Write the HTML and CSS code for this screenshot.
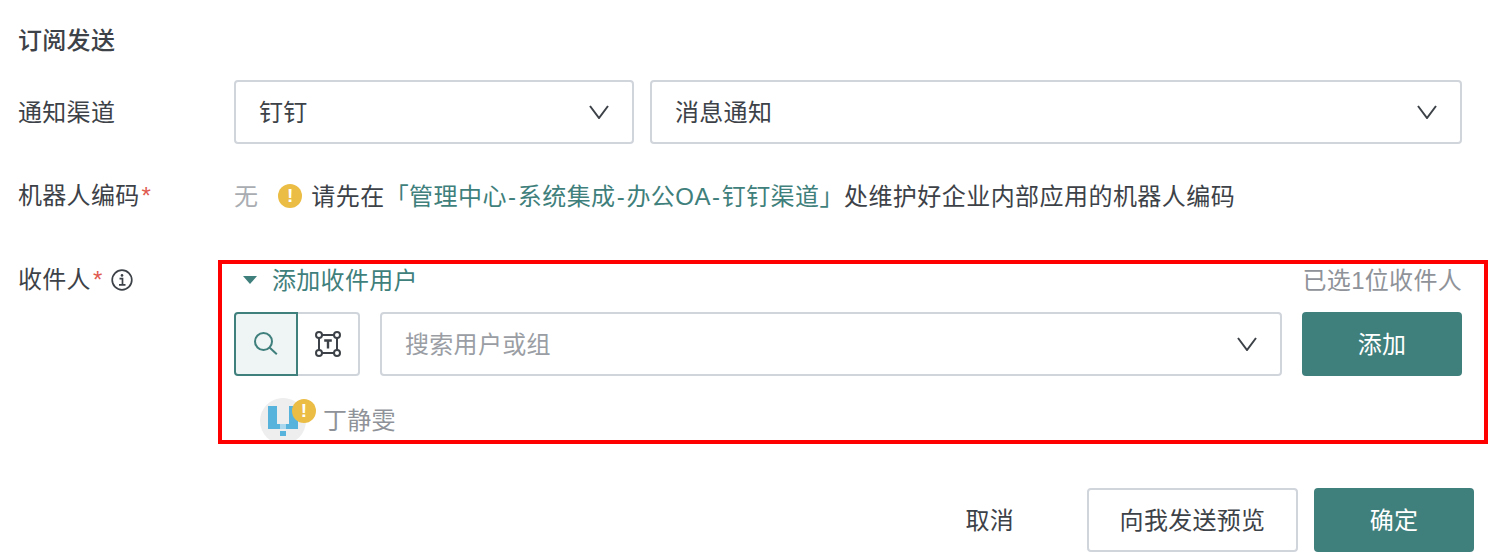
FILE: index.html
```html
<!DOCTYPE html>
<html lang="zh-CN">
<head>
  <meta charset="UTF-8">
  <title>订阅发送</title>
  <link rel="stylesheet" href="styles.css">
</head>
<body>
  <div class="page">
    <h1 class="title">订阅发送</h1>

    <div class="row row-channel">
      <div class="label">通知渠道</div>
      <div class="select select-small">
        <span class="value">钉钉</span>
        <svg class="chevron" viewBox="0 0 20 14"><path d="M1 1l9 12 9-12"/></svg>
      </div>
      <div class="select select-grow">
        <span class="value">消息通知</span>
        <svg class="chevron" viewBox="0 0 20 14"><path d="M1 1l9 12 9-12"/></svg>
      </div>
    </div>

    <div class="row row-robot">
      <div class="label">机器人编码<span class="star">*</span></div>
      <span class="none">无</span>
      <span class="warn warn-gap">!</span>
      <span class="hint">请先在<span class="link">「管理中心<span class="dash">-</span>系统集成<span class="dash">-</span>办公OA<span class="dash">-</span>钉钉渠道」</span>处维护好企业内部应用的机器人编码</span>
    </div>

    <div class="row row-users">
      <div class="label">
        收件人<span class="star">*</span>
        <svg class="info" viewBox="0 0 22 22">
          <circle cx="11" cy="11" r="9.8"/>
          <path d="M8.5 9.6h3v6M8 15.8h6.5"/>
          <circle class="dot" cx="11" cy="6.4" r="1.3"/>
        </svg>
      </div>
      <div class="highlight">
        <div class="users-head">
          <span class="toggle"><i class="triangle"></i><span class="head-text">添加收件用户</span></span>
          <span class="count head-text">已选1位收件人</span>
        </div>
        <div class="search-row">
          <div class="mode mode-active">
            <svg class="mode-icon" viewBox="0 0 24 24">
              <circle cx="9.500" cy="9.500" r="8.500"/>
              <path d="M15.800 15.800l7 6.500"/>
            </svg>
          </div>
          <div class="mode">
            <svg class="mode-icon mode-text" viewBox="0 0 26 26">
              <path d="M4 7v12M22 7v12M7 4h12M7 22h12"/>
              <circle cx="4" cy="4" r="3"/>
              <circle cx="22" cy="4" r="3"/>
              <circle cx="4" cy="22" r="3"/>
              <circle cx="22" cy="22" r="3"/>
              <path class="mode-t" d="M9.200 9.500h7.600M13 9.500v8"/>
            </svg>
          </div>
          <div class="select select-search">
            <span class="value placeholder">搜索用户或组</span>
            <svg class="chevron" viewBox="0 0 20 14"><path d="M1 1l9 12 9-12"/></svg>
          </div>
          <button class="btn btn-primary btn-add">添加</button>
        </div>
        <div class="user">
          <div class="avatar">
            <svg class="logo" viewBox="0 0 30 30">
              <path d="M0 0h9v18h3v5H0zM21 0h9v23H18v-5h3z" fill="#58b3dc"/>
              <path d="M12 18h6v5h-6z" fill="#a9d8ee"/>
              <path d="M12 25h6v5h-6z" fill="#58b3dc"/>
            </svg>
            <span class="warn warn-badge">!</span>
          </div>
          <span class="user-name">丁静雯</span>
        </div>
      </div>
    </div>

    <div class="footer">
      <span class="cancel">取消</span>
      <button class="btn btn-plain">向我发送预览</button>
      <button class="btn btn-primary btn-ok">确定</button>
    </div>
  </div>
</body>
</html>
```

FILE: styles.css
```css
* {
  box-sizing: border-box;
}

body {
  margin: 0;
  background: #fff;
  color: #3d4248;
  font-family: "Liberation Sans", "Noto Sans CJK SC", sans-serif;
  font-size: 24px;
  letter-spacing: 0.3px;
}

.page {
  width: 1488px;
  height: 558px;
  padding-left: 18px;
  overflow: hidden;
}

.title {
  margin: 0;
  height: 80px;
  line-height: 82px;
  font-size: 24px;
  font-weight: 500;
}

.row {
  display: flex;
}

.label {
  flex: none;
  width: 216px;
  line-height: 40px;
  white-space: nowrap;
}

.star {
  margin-left: 2px;
  color: #e05a50;
}

.row-channel {
  align-items: center;
  padding-right: 26px;
  gap: 16px;
}

.row-channel .label {
  margin-right: -16px;
  padding-top: 2px;
}

.select {
  display: flex;
  align-items: center;
  justify-content: space-between;
  height: 64px;
  padding: 0 23px;
  border: 2px solid #d0d5dc;
  border-radius: 4px;
}

.value {
  margin-bottom: 4px;
}

.select-small {
  width: 400px;
}

.select-grow {
  flex: 1;
}

.select-search {
  flex: 1;
  margin-left: 20px;
}

.chevron {
  width: 20px;
  height: 14px;
  fill: none;
  stroke: #3d4248;
  stroke-width: 2;
}

.row-robot {
  align-items: center;
  height: 40px;
  margin-top: 32px;
}

.none {
  margin-bottom: 4px;
  color: #a9adb2;
}

.warn {
  display: inline-block;
  width: 24px;
  height: 24px;
  border-radius: 50%;
  background: #ebbd45;
  color: #fff;
  font-size: 19px;
  font-weight: 700;
  line-height: 24px;
  text-align: center;
}

.warn-gap {
  margin: 0 9px 0 20px;
}

.hint {
  margin-bottom: 4px;
  letter-spacing: 0.45px;
}

.link {
  color: #3f7f7c;
}

.dash {
  padding: 0 1.200px;
}

.row-users {
  margin-top: 44px;
}

.row-users .label {
  display: flex;
  align-items: center;
  width: 200px;
  height: 40px;
}

.info {
  width: 22px;
  height: 22px;
  margin-left: 8px;
  fill: none;
  stroke: #3d4248;
  stroke-width: 1.7;
}

.info .dot {
  fill: #3d4248;
  stroke: none;
}

.highlight {
  flex: 1;
  height: 184px;
  padding: 0 22px 0 12px;
  border: 4px solid #f00;
  overflow: hidden;
}

.users-head {
  display: flex;
  align-items: center;
  justify-content: space-between;
  height: 32px;
}

.toggle {
  display: flex;
  align-items: center;
  color: #3f7f7c;
}

.head-text {
  margin-bottom: 4px;
}

.triangle {
  width: 0;
  height: 0;
  margin: 0 15px 0 9px;
  border-top: 8px solid #3f7f7c;
  border-left: 7px solid transparent;
  border-right: 7px solid transparent;
}

.count {
  color: #8f9399;
}

.search-row {
  display: flex;
  margin-top: 16px;
}

.mode {
  display: flex;
  align-items: center;
  justify-content: center;
  width: 62px;
  height: 64px;
  border: 2px solid #d0d5dc;
  border-left: 0;
  border-radius: 0 4px 4px 0;
}

.mode-active {
  width: 64px;
  background: #eff4f4;
  border: 2px solid #3f7f7c;
  border-radius: 4px 0 0 4px;
}

.mode-icon {
  width: 24px;
  height: 24px;
  fill: none;
  stroke: #3f7f7c;
  stroke-width: 2;
}

.mode-text {
  width: 26px;
  height: 26px;
  stroke: #3d4248;
}

.mode-t {
  stroke-width: 2.400;
}

.placeholder {
  color: #9a9ea4;
}

.btn {
  height: 64px;
  padding: 0 0 4px;
  border-radius: 4px;
  font-family: inherit;
  font-size: 24px;
  letter-spacing: inherit;
}

.btn-primary {
  border: 0;
  background: #3f7f7c;
  color: #fff;
}

.btn-plain {
  width: 211px;
  background: #fff;
  border: 2px solid #d0d5dc;
  color: #3d4248;
}

.btn-add {
  flex: none;
  width: 160px;
  margin-left: 20px;
}

.btn-ok {
  width: 160px;
}

.user {
  display: flex;
  align-items: center;
  margin-top: 22px;
  padding-left: 26px;
}

.avatar {
  position: relative;
  display: flex;
  align-items: center;
  justify-content: center;
  flex: none;
  width: 46px;
  height: 46px;
  border-radius: 50%;
  background: #eeeeee;
}

.logo {
  width: 30px;
  height: 30px;
}

.warn-badge {
  position: absolute;
  top: 1px;
  left: 32px;
}

.user-name {
  margin: 0 0 6px 17px;
  color: #8f9399;
}

.footer {
  display: flex;
  align-items: center;
  justify-content: flex-end;
  margin-top: 44px;
  padding-right: 14px;
  gap: 16px;
}

.cancel {
  margin: 0 57px 4px 0;
}
```
